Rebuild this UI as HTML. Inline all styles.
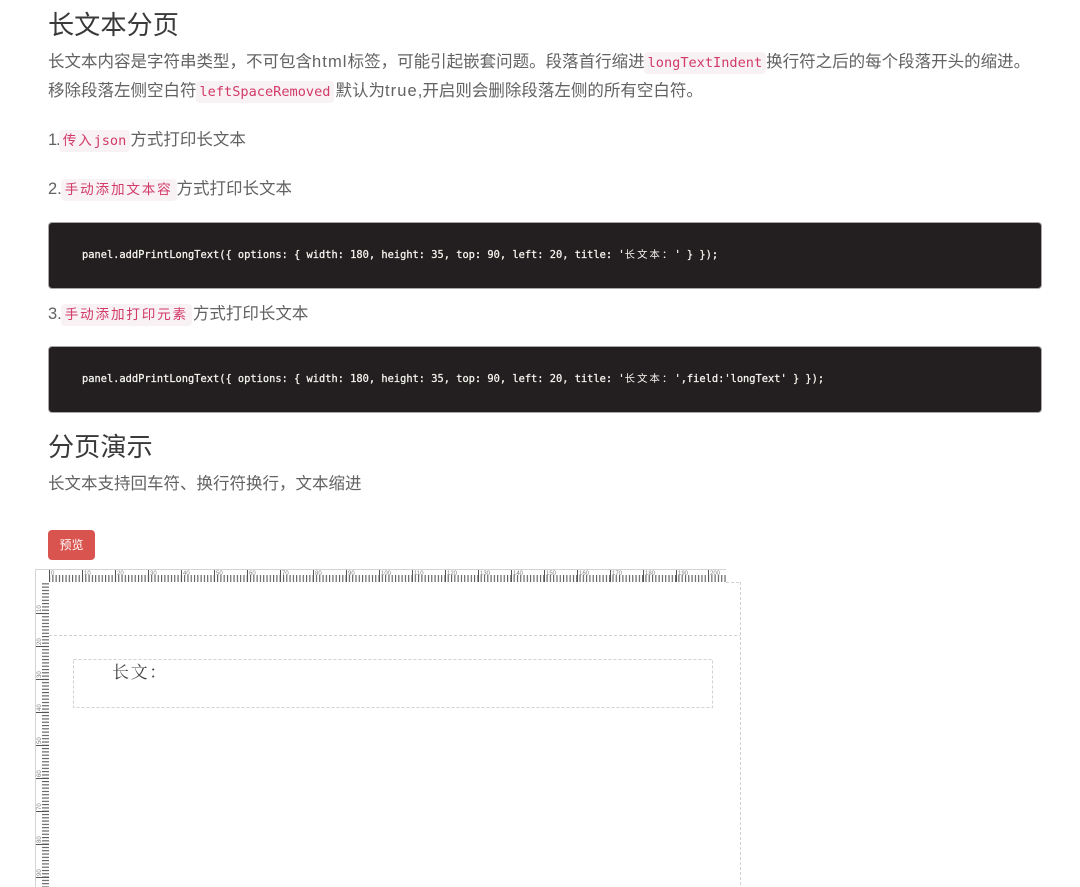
<!DOCTYPE html>
<html lang="zh"><head><meta charset="utf-8"><title>长文本分页</title>
<style>
html,body{margin:0;padding:0;background:#fff}
body{position:relative;width:1080px;height:887px;overflow:hidden;font-family:"Liberation Sans","Noto Sans CJK SC",sans-serif;color:#626262;font-size:16.5px}
.t{position:absolute;white-space:nowrap;line-height:24px;left:48px}
.l{letter-spacing:1.1px}
h2{position:absolute;left:48px;margin:0;font-weight:400;font-size:26.2px;line-height:36px;color:#3a3a3a;white-space:nowrap}
code{font-family:"DejaVu Sans Mono","Noto Sans CJK SC",monospace;font-size:13.6px;color:#d23a68;background:#f8f2f5;border-radius:4px;padding:3px 4px;margin:0 0 0 -1px}
code i{font-style:normal;letter-spacing:1.8px}
.pre{position:absolute;left:48px;width:992px;height:65px;background:#231f20;border:1px solid #aaa6a6;border-radius:4px;box-sizing:content-box;margin:0}
.pre span{position:absolute;left:33px;top:24px;line-height:16px;white-space:pre;font-family:"DejaVu Sans Mono","Noto Sans CJK SC",monospace;font-size:10.36px;color:#f6f6f0;-webkit-text-stroke:.25px #f6f6f0}
.pre i{font-style:normal;letter-spacing:2.1px;-webkit-text-stroke:0}
.btn{position:absolute;left:48px;top:530px;width:47px;height:30px;background:#d9534f;border-radius:4px;color:#fff;font-size:12px;line-height:30px;text-align:center}
svg{position:absolute;left:0;top:0}
svg text{font-family:"Liberation Sans",sans-serif;font-size:6px;fill:#808080}
.lt{position:absolute;left:112px;top:661px;font-size:17px;letter-spacing:1.6px;line-height:24px;color:#444;font-family:"Liberation Serif","Noto Serif CJK SC",serif}
</style></head><body>
<h2 style="top:7px">长文本分页</h2>
<div class="t" style="top:50px">长文本内容是字符串类型，不可包含<span class="l">html</span>标签，可能引起嵌套问题。段落首行缩进<code>longTextIndent</code>换行符之后的每个段落开头的缩进。</div>
<div class="t" style="top:79px">移除段落左侧空白符<code style="margin-right:1px">leftSpaceRemoved</code>默认为<span class="l">true</span>,开启则会删除段落左侧的所有空白符。</div>
<div class="t" style="top:128px"><span style="letter-spacing:-1px">1.</span><code><i>传入</i>json</code>方式打印长文本</div>
<div class="t" style="top:177px">2.<code><i>手动添加文本容</i></code>方式打印长文本</div>
<div class="pre" style="top:222px"><span>panel.addPrintLongText({ options: { width: 180, height: 35, top: 90, left: 20, title: '<i>长文本：</i>' } });</span></div>
<div class="t" style="top:302px">3.<code style="margin-right:1px"><i>手动添加打印元素</i></code>方式打印长文本</div>
<div class="pre" style="top:346px"><span>panel.addPrintLongText({ options: { width: 180, height: 35, top: 90, left: 20, title: '<i>长文本：</i>',field:'longText' } });</span></div>
<h2 style="top:429px">分页演示</h2>
<div class="t" style="top:472px">长文本支持回车符、换行符换行，文本缩进</div>
<div class="btn">预览</div>
<svg width="1080" height="887" viewBox="0 0 1080 887">
<defs>
<pattern id="h" x="49" y="0" width="3.295" height="887" patternUnits="userSpaceOnUse"><rect x="0" y="575" width="1.1" height="7" fill="#5a5a5a"/></pattern>
<pattern id="v" x="0" y="580" width="887" height="3.295" patternUnits="userSpaceOnUse"><rect x="42" y="0" width="7" height="1.1" fill="#5a5a5a"/></pattern>
</defs>
<path d="M35 569.5H726M35.5 569V887" stroke="#d4d4d4" fill="none"/>
<rect x="49" y="570" width="677" height="12" fill="url(#h)"/>
<rect x="35" y="583" width="14" height="304" fill="url(#v)"/>
<path d="M49.5 570V582M82.5 570V582M115.5 570V582M148.5 570V582M181.5 570V582M214.5 570V582M247.5 570V582M280.5 570V582M313.5 570V582M346.5 570V582M379.5 570V582M412.5 570V582M445.5 570V582M478.5 570V582M511.5 570V582M544.5 570V582M577.5 570V582M610.5 570V582M643.5 570V582M676.5 570V582M708.5 570V582" stroke="#555"/>
<path d="M36 613.5H49M36 646.5H49M36 679.5H49M36 712.5H49M36 745.5H49M36 778.5H49M36 811.5H49M36 844.5H49M36 877.5H49" stroke="#555"/>
<g>
<text x="51" y="575">0</text><text x="84" y="575">10</text><text x="117" y="575">20</text><text x="150" y="575">30</text><text x="183" y="575">40</text><text x="216" y="575">50</text><text x="249" y="575">60</text><text x="282" y="575">70</text><text x="315" y="575">80</text><text x="348" y="575">90</text><text x="381" y="575">100</text><text x="414" y="575">110</text><text x="447" y="575">120</text><text x="480" y="575">130</text><text x="513" y="575">140</text><text x="546" y="575">150</text><text x="579" y="575">160</text><text x="612" y="575">170</text><text x="645" y="575">180</text><text x="678" y="575">190</text><text x="710" y="575">200</text>
</g>
<g>
<text transform="translate(41 612) rotate(-90)">10</text><text transform="translate(41 645) rotate(-90)">20</text><text transform="translate(41 678) rotate(-90)">30</text><text transform="translate(41 711) rotate(-90)">40</text><text transform="translate(41 744) rotate(-90)">50</text><text transform="translate(41 777) rotate(-90)">60</text><text transform="translate(41 810) rotate(-90)">70</text><text transform="translate(41 843) rotate(-90)">80</text><text transform="translate(41 876) rotate(-90)">90</text>
</g>
<g fill="none" stroke="#d0d0d0" stroke-dasharray="3 2">
<path d="M726 582.5H740M740.5 582V887M49 635.5H740"/>
<rect x="73.5" y="659.5" width="639" height="48"/>
</g>
</svg>
<div class="lt">长文：</div>
</body></html>
